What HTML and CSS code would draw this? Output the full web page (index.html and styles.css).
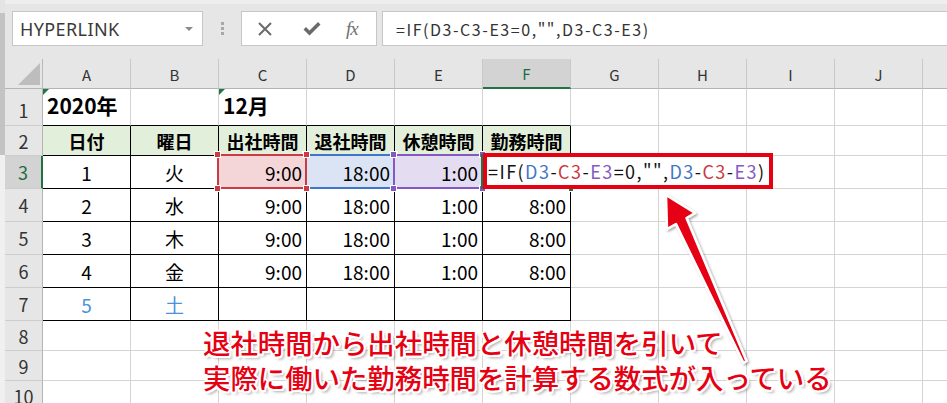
FILE: index.html
```html
<!DOCTYPE html>
<html lang="ja">
<head>
<meta charset="utf-8">
<title>Excel formula</title>
<link rel="stylesheet" href="styles.css">
</head>
<body>
<div class="app">
  <div class="strip"></div>
  <div class="main">
    <div class="toolbar">
      <div class="namebox"><span>HYPERLINK</span><i class="caret"></i></div>
      <div class="grip"><i></i><i></i><i></i></div>
      <div class="fbtns">
        <svg class="ico" width="16" height="16" viewBox="0 0 16 16"><path d="M2 2 L14 14 M14 2 L2 14" stroke="#6a6a6a" stroke-width="2" fill="none"/></svg>
        <svg class="ico" width="20" height="16" viewBox="0 0 20 16"><path d="M1.5 8.5 L4 6 L7.5 9.5 L16 1 L18.5 3.5 L7.5 14.5 Z" fill="#6a6a6a"/></svg>
        <span class="fx">fx</span>
      </div>
      <div class="finput">=IF(D3-C3-E3=0,"",D3-C3-E3)</div>
    </div>
    <div class="grid">
      <div class="corner"><svg width="37" height="29" viewBox="0 0 37 29"><polygon points="35,4 35,26 13,26" fill="#bdbdbd"/></svg></div>
      <div class="ch">A</div><div class="ch">B</div><div class="ch">C</div><div class="ch">D</div><div class="ch">E</div><div class="ch sel">F</div><div class="ch">G</div><div class="ch">H</div><div class="ch">I</div><div class="ch">J</div><div class="ch">K</div>

      <div class="rh r1">1</div>
      <div class="c bb yr tri">2020年</div><div class="c bb"></div><div class="c bb yr tri">12月</div><div class="c bb"></div><div class="c bb"></div><div class="c bb"></div>
      <div class="c"></div><div class="c"></div><div class="c"></div><div class="c"></div><div class="c"></div>

      <div class="rh">2</div>
      <div class="c bx hd">日付</div><div class="c bx hd">曜日</div><div class="c bx hd">出社時間</div><div class="c bx hd">退社時間</div><div class="c bx hd">休憩時間</div><div class="c bx hd">勤務時間</div>
      <div class="c"></div><div class="c"></div><div class="c"></div><div class="c"></div><div class="c"></div>

      <div class="rh sel">3</div>
      <div class="c bx ctr">1</div><div class="c bx ctr">火</div>
      <div class="c bx rt ref red">9:00<i class="h tl"></i><i class="h tr"></i><i class="h bl"></i><i class="h br"></i></div>
      <div class="c bx rt ref blue">18:00<i class="h tl"></i><i class="h tr"></i><i class="h bl"></i><i class="h br"></i></div>
      <div class="c bx rt ref purple">1:00<i class="h tl"></i><i class="h tr"></i><i class="h bl"></i><i class="h br"></i></div>
      <div class="c bx act"><i class="fill"></i>
        <div class="edit">=IF(<span class="kb">D3</span>-<span class="kr">C3</span>-<span class="kp">E3</span>=0,"",<span class="kb">D3</span>-<span class="kr">C3</span>-<span class="kp">E3</span>)</div>
      </div>
      <div class="c"></div><div class="c"></div><div class="c"></div><div class="c"></div><div class="c"></div>

      <div class="rh">4</div>
      <div class="c bx ctr">2</div><div class="c bx ctr">水</div><div class="c bx rt">9:00</div><div class="c bx rt">18:00</div><div class="c bx rt">1:00</div><div class="c bx rt">8:00</div>
      <div class="c"></div><div class="c"></div><div class="c"></div><div class="c"></div><div class="c"></div>

      <div class="rh">5</div>
      <div class="c bx ctr">3</div><div class="c bx ctr">木</div><div class="c bx rt">9:00</div><div class="c bx rt">18:00</div><div class="c bx rt">1:00</div><div class="c bx rt">8:00</div>
      <div class="c"></div><div class="c"></div><div class="c"></div><div class="c"></div><div class="c"></div>

      <div class="rh">6</div>
      <div class="c bx ctr">4</div><div class="c bx ctr">金</div><div class="c bx rt">9:00</div><div class="c bx rt">18:00</div><div class="c bx rt">1:00</div><div class="c bx rt">8:00</div>
      <div class="c"></div><div class="c"></div><div class="c"></div><div class="c"></div><div class="c"></div>

      <div class="rh">7</div>
      <div class="c bx ctr sat">5</div><div class="c bx ctr sat">土</div><div class="c bx"></div><div class="c bx"></div><div class="c bx"></div><div class="c bx"></div>
      <div class="c"></div><div class="c"></div><div class="c"></div><div class="c"></div><div class="c"></div>

      <div class="rh">8</div>
      <div class="c"></div><div class="c"></div><div class="c"></div><div class="c"></div><div class="c"></div><div class="c"></div><div class="c"></div><div class="c"></div><div class="c"></div><div class="c"></div><div class="c"></div>

      <div class="rh">9</div>
      <div class="c"></div><div class="c"></div><div class="c"></div><div class="c"></div><div class="c"></div><div class="c"></div><div class="c"></div><div class="c"></div><div class="c"></div><div class="c"></div><div class="c"></div>

      <div class="rh">10</div>
      <div class="c"></div><div class="c"></div><div class="c"></div><div class="c"></div><div class="c"></div><div class="c"></div><div class="c"></div><div class="c"></div><div class="c"></div><div class="c"></div><div class="c"></div>
    </div>
  </div>

  <div class="note">退社時間から出社時間と休憩時間を引いて<br>実際に働いた勤務時間を計算する数式が入っている</div>

  <svg class="arrow" width="947" height="403" viewBox="0 0 947 403">
    <defs>
      <filter id="sh" x="-20%" y="-20%" width="140%" height="140%">
        <feDropShadow dx="1.5" dy="1.5" stdDeviation="1.2" flood-color="#000" flood-opacity="0.35"/>
      </filter>
    </defs>
    <polygon points="666,195 695,213 686.5,218 746.5,361 743.5,363 676,224 667,229" fill="#e60012" stroke="#fff" stroke-width="2.5" stroke-linejoin="round" filter="url(#sh)"/>
  </svg>
</div>
</body>
</html>
```

FILE: styles.css
```css
* { box-sizing: border-box; }

html, body {
  margin: 0;
  padding: 0;
  background: #e6e6e6;
}

body {
  font-family: "Noto Sans CJK JP", "Noto Sans", sans-serif;
  color: #000;
}

.app {
  position: relative;
  width: 947px;
  height: 403px;
  overflow: hidden;
  display: flex;
}

.strip {
  flex: 0 0 5px;
  background: linear-gradient(to bottom, #e4e4e4 0 13px, #c3c3c3 13px 155px, #f0f0f0 155px);
}

.main {
  flex: 1 1 auto;
  min-width: 0;
  display: flex;
  flex-direction: column;
}

/* ---------- formula bar ---------- */
.toolbar {
  flex: 0 0 59px;
  height: 59px;
  display: flex;
  align-items: flex-start;
  padding: 11px 0 0 7px;
  background: linear-gradient(to bottom, #eeeeee 0 4px, #e6e6e6 4px);
}

.namebox {
  flex: 0 0 191px;
  height: 35px;
  background: #fff;
  border: 1px solid #c6c6c6;
  display: flex;
  align-items: center;
  justify-content: space-between;
  padding: 0 9px 0 7px;
  font-family: "Noto Sans", sans-serif;
  font-size: 18px;
  letter-spacing: 0.4px;
  color: #3a3a3a;
}

.caret {
  width: 0;
  height: 0;
  border-left: 4px solid transparent;
  border-right: 4px solid transparent;
  border-top: 4px solid #8a8a8a;
}

.grip {
  flex: 0 0 38px;
  height: 35px;
  display: flex;
  flex-direction: column;
  align-items: center;
  justify-content: center;
  gap: 2px;
}

.grip i {
  width: 3px;
  height: 3px;
  background: #a8a8a8;
}

.fbtns {
  flex: 0 0 136px;
  height: 35px;
  background: #fff;
  border: 1px solid #c6c6c6;
  display: flex;
  align-items: center;
  padding-left: 15px;
}

.fbtns .ico:nth-child(1) { margin-right: 29px; }
.fbtns .ico:nth-child(2) { margin-right: 24px; }

.fx {
  font-family: "Liberation Serif", serif;
  font-style: italic;
  font-size: 19px;
  color: #707070;
  letter-spacing: -1px;
}

.finput {
  flex: 1 1 auto;
  margin-left: 5px;
  margin-right: -3px;
  height: 35px;
  background: #fff;
  border: 1px solid #c6c6c6;
  display: flex;
  align-items: center;
  padding-left: 13px;
  font-size: 16px;
  letter-spacing: 1.55px;
  color: #333;
}

/* ---------- sheet grid ---------- */
.grid {
  display: grid;
  grid-template-columns: 38px repeat(11, 88px);
  grid-template-rows: 30px 37px 30px repeat(5, 33px) repeat(3, 30px);
  background: #fff;
}

.corner {
  background: #e6e6e6;
  border-right: 1px solid #b9b9b9;
  border-bottom: 1px solid #b4b4b4;
}

.corner svg { display: block; }

.ch {
  background: #e6e6e6;
  border-right: 1px solid #c8c8c8;
  border-bottom: 1px solid #b4b4b4;
  display: flex;
  align-items: center;
  justify-content: center;
  font-size: 15px;
  color: #333;
  padding-top: 1px;
}

.ch.sel {
  background: #d3d3d3;
  border-bottom: 2px solid #217346;
  color: #1d6b44;
}

.rh {
  background: #e6e6e6;
  border-right: 1px solid #b4b4b4;
  border-bottom: 1px solid #cdcdcd;
  display: flex;
  align-items: center;
  justify-content: center;
  font-size: 18px;
  color: #333;
}

.rh.r1 { padding-top: 6px; }

.rh.sel {
  background: #d3d3d3;
  border-right: 2px solid #217346;
  color: #1d6b44;
}

.c {
  position: relative;
  border-right: 1px solid #d4d4d4;
  border-bottom: 1px solid #d4d4d4;
  display: flex;
  align-items: center;
  padding: 0 4px;
  font-size: 19px;
  white-space: nowrap;
}

.c.bb { border-bottom-color: #000; }
.c.bx { border-right-color: #000; border-bottom-color: #000; }
.c.ctr { justify-content: center; }
.c.rt { justify-content: flex-end; }

.c.hd {
  background: #e2efda;
  justify-content: center;
  font-weight: 700;
  font-size: 18px;
}

.c.yr {
  font-weight: 700;
  font-size: 21px;
  padding-left: 4px;
  padding-bottom: 4px;
}

.c.tri::before {
  content: "";
  position: absolute;
  left: 0;
  top: 0;
  border-top: 6px solid #1e7a40;
  border-right: 6px solid transparent;
}

.c.sat { color: #4a92dc; }

/* reference highlights */
.ref.red { background: #f5d6d8; z-index: 2; }
.ref.blue { background: #dae4f4; z-index: 1; }
.ref.purple { background: #e4dcf1; z-index: 2; }

.ref::after {
  content: "";
  position: absolute;
  top: -2px;
  left: -2px;
  right: -1px;
  bottom: -1px;
  border: 2px solid currentColor;
  pointer-events: none;
}

.ref.red::after { border-color: #cc3a44; }
.ref.blue::after { border-color: #3f76c8; }
.ref.purple::after { border-color: #8659c2; }

.h {
  position: absolute;
  width: 7px;
  height: 7px;
  border: 1px solid #fff;
  z-index: 3;
}

.red .h { background: #cc3a44; }
.blue .h { background: #3f76c8; }
.purple .h { background: #8659c2; }

.h.tl { top: -5px; left: -5px; }
.h.tr { top: -5px; right: -4px; }
.h.bl { bottom: -4px; left: -5px; }
.h.br { bottom: -4px; right: -4px; }

/* active cell with edit box */
.act { z-index: 4; }

.act::after {
  content: "";
  position: absolute;
  top: -2px;
  left: -2px;
  right: -1px;
  bottom: -1px;
  border: 2px solid #217346;
}

.fill {
  position: absolute;
  right: -4px;
  bottom: -4px;
  width: 6px;
  height: 6px;
  background: #217346;
  border: 1px solid #fff;
  z-index: 1;
}

.edit {
  position: absolute;
  left: 0;
  top: -3px;
  width: 290px;
  height: 36px;
  background: #fff;
  border: 4px solid #e60012;
  display: flex;
  align-items: center;
  padding-left: 1px;
  font-size: 18px;
  letter-spacing: 1.45px;
  color: #111;
  z-index: 2;
}

.kb { color: #3f76c8; }
.kr { color: #cc3a44; }
.kp { color: #8659c2; }

/* ---------- annotation overlay ---------- */
.note {
  position: absolute;
  left: 203px;
  top: 325px;
  font-size: 27.4px;
  line-height: 35px;
  font-weight: 500;
  color: #e60012;
  white-space: nowrap;
  z-index: 6;
  text-shadow:
    2px 0 0 #fff, -2px 0 0 #fff, 0 2px 0 #fff, 0 -2px 0 #fff,
    1.5px 1.5px 0 #fff, -1.5px 1.5px 0 #fff, 1.5px -1.5px 0 #fff, -1.5px -1.5px 0 #fff,
    3px 3px 3px rgba(0, 0, 0, 0.35);
}

.arrow {
  position: absolute;
  left: 0;
  top: 0;
  z-index: 7;
  pointer-events: none;
}
```
